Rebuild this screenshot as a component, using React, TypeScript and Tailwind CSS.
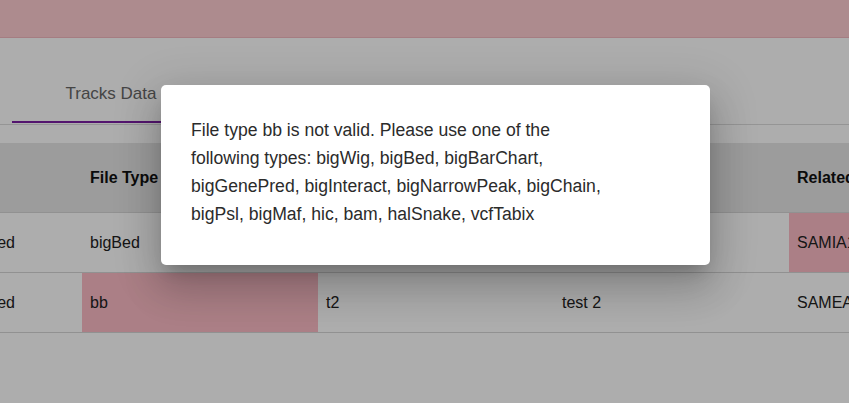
const columns = [
  { key: 'status', label: 'Track Name', width: 'w-[247px]' },
  { key: 'type', label: 'File Type', width: 'w-[236px]' },
  { key: 'name', label: 'Short Label', width: 'w-[236px]' },
  { key: 'desc', label: 'Description', width: 'w-[235px]' },
  { key: 'related', label: 'Related Specimen', width: 'w-[236px]' },
]

type Row = { [k: string]: string }

const rows: Row[] = [
  { status: 'Track data not uploaded', type: 'bigBed', name: 't1', desc: 'test 1', related: 'SAMIA1234567' },
  { status: 'Track data not uploaded', type: 'bb', name: 't2', desc: 'test 2', related: 'SAMEA7654321' },
]

// cells flagged by the validator
const errors: { [row: number]: string[] } = {
  0: ['related'],
  1: ['type'],
}

export default function App() {
  return (
    <div className="relative w-full h-[403px] overflow-hidden bg-white font-['Liberation_Sans',Arial,sans-serif] text-[#212121]">
      {/* Top bar */}
      <div className="h-[38px] bg-[#ffcdd2] border-b border-[#f3b9c0]" />

      {/* Tabs */}
      <div className="mt-[32px] pb-px border-b border-[#dcdcdc] flex">
        <div className="ml-[12px] w-[198px] pt-[14px] pb-[18px] border-b-2 border-[#7b1fa2] text-center text-[17px] leading-[19px] text-[#666]">
          Tracks Data
        </div>
      </div>

      {/* Table */}
      <div className="mt-[18px] overflow-hidden">
        <div className="ml-[-165px] w-max">
          <div className="flex h-[70px] bg-[#e6e6e6] border-b border-[#d6d6d6]">
            {columns.map(col => (
              <div key={col.key} className={`${col.width} shrink-0 px-2 flex items-center font-bold text-[16px] text-[#111]`}>
                {col.label}
              </div>
            ))}
          </div>
          {rows.map((row, i) => (
            <div key={i} className="flex h-[60px] border-b border-[#d6d6d6]">
              {columns.map(col => (
                <div
                  key={col.key}
                  className={`${col.width} shrink-0 px-2 flex items-center text-[16px] whitespace-nowrap ${
                    errors[i]?.includes(col.key) ? 'bg-[#fdbcc6]' : ''
                  }`}
                >
                  {row[col.key]}
                </div>
              ))}
            </div>
          ))}
        </div>
      </div>

      {/* Backdrop */}
      <div className="absolute inset-0 bg-[rgba(0,0,0,0.32)]" />

      {/* Dialog */}
      <div className="absolute left-[161px] top-[85px] w-[549px] h-[180px] bg-white rounded-[5px] shadow-[0_11px_15px_-7px_rgba(0,0,0,0.2),0_24px_38px_3px_rgba(0,0,0,0.14),0_9px_46px_8px_rgba(0,0,0,0.12)] pt-[31px] px-[30px]">
        <p className="w-[425px] text-[17.6px] leading-[28px] text-[#2b2b2b]">
          File type bb is not valid. Please use one of the following types: bigWig, bigBed, bigBarChart,
          bigGenePred, bigInteract, bigNarrowPeak, bigChain, bigPsl, bigMaf, hic, bam, halSnake, vcfTabix
        </p>
      </div>
    </div>
  )
}
